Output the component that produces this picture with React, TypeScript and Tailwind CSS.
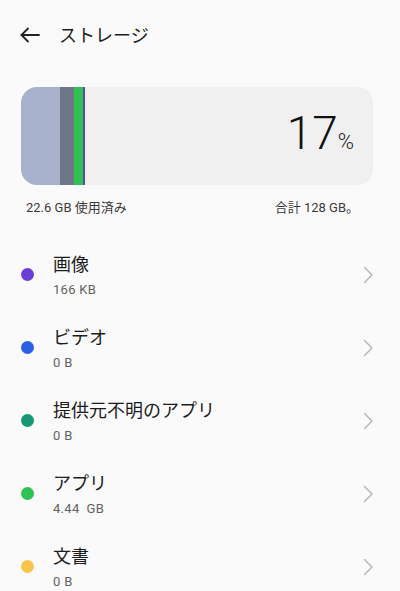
import React from 'react'

type Item = {
  title: string
  size: string
  color: string
}

const items: Item[] = [
  { title: '画像', size: '166 KB', color: 'bg-[#6b3fd6]' },
  { title: 'ビデオ', size: '0 B', color: 'bg-[#2b5fe6]' },
  { title: '提供元不明のアプリ', size: '0 B', color: 'bg-[#159873]' },
  { title: 'アプリ', size: '4.44  GB', color: 'bg-[#2ec153]' },
  { title: '文書', size: '0 B', color: 'bg-[#f7c54c]' },
]

const font = { fontFamily: 'Roboto, "Noto Sans CJK JP", sans-serif' }

const BackArrow = () => (
  <svg width="20" height="16" viewBox="0 0 20 16" fill="none" stroke="#222" strokeWidth="1.8" strokeLinecap="round" strokeLinejoin="round">
    <path d="M19 8H1.5" />
    <path d="M8 1.5L1.5 8L8 14.5" />
  </svg>
)

const Chevron = () => (
  <svg width="10" height="18" viewBox="0 0 10 18" fill="none" stroke="#b3b3b3" strokeWidth="1.4" strokeLinecap="round" strokeLinejoin="round">
    <path d="M1.5 1.5L9 9L1.5 16.5" />
  </svg>
)

const StorageRow = ({ item }: { item: Item }) => (
  <div className="flex h-[73px] items-center">
    <div className={`ml-[21px] size-[13px] shrink-0 rounded-full ${item.color}`} />
    <div className="ml-[19px] mt-[2px] flex flex-1 flex-col">
      <span className="text-[18px] leading-[24px] text-[#1c1c1c]">{item.title}</span>
      <span className="mt-[4px] whitespace-pre text-[13px] leading-[18px] tracking-[0.3px] text-[#626262]">{item.size}</span>
    </div>
    <div className="mr-[27px]">
      <Chevron />
    </div>
  </div>
)

export default function App() {
  return (
    <div className="h-[591px] w-[400px] overflow-hidden bg-[#fafafa]" style={font}>
      <div className="flex h-[70px] items-center">
        <div className="ml-[20px] flex items-center">
          <BackArrow />
        </div>
        <span className="ml-[19px] text-[18px] text-[#1c1c1c]">ストレージ</span>
      </div>

      <div className="ml-[21px] mt-[17px] flex h-[98px] w-[352px] overflow-hidden rounded-[16px] bg-[#f0f0f0]">
        <div className="w-[39px] bg-[#a8b1cb]" />
        <div className="w-[14px] bg-[#707689]" />
        <div className="w-[9px] bg-[#2ec44f]" />
        <div className="w-[2px] bg-[#5a49b8]" />
        <div className="flex flex-1 items-baseline justify-end pr-[19px] pt-[23px]">
          <span className="text-[46px] font-light leading-[46px] text-[#111]">17</span>
          <span className="text-[22px] font-light leading-none text-[#222]">%</span>
        </div>
      </div>

      <div className="mt-[15px] flex w-[400px] justify-between pl-[26px] pr-[41px] text-[13px] leading-[16px] text-[#3a3a3a]">
        <span>22.6 GB 使用済み</span>
        <span>合計 128 GB。</span>
      </div>

      <div className="mt-[22px]">
        {items.map((item) => (
          <StorageRow key={item.title} item={item} />
        ))}
      </div>
    </div>
  )
}
